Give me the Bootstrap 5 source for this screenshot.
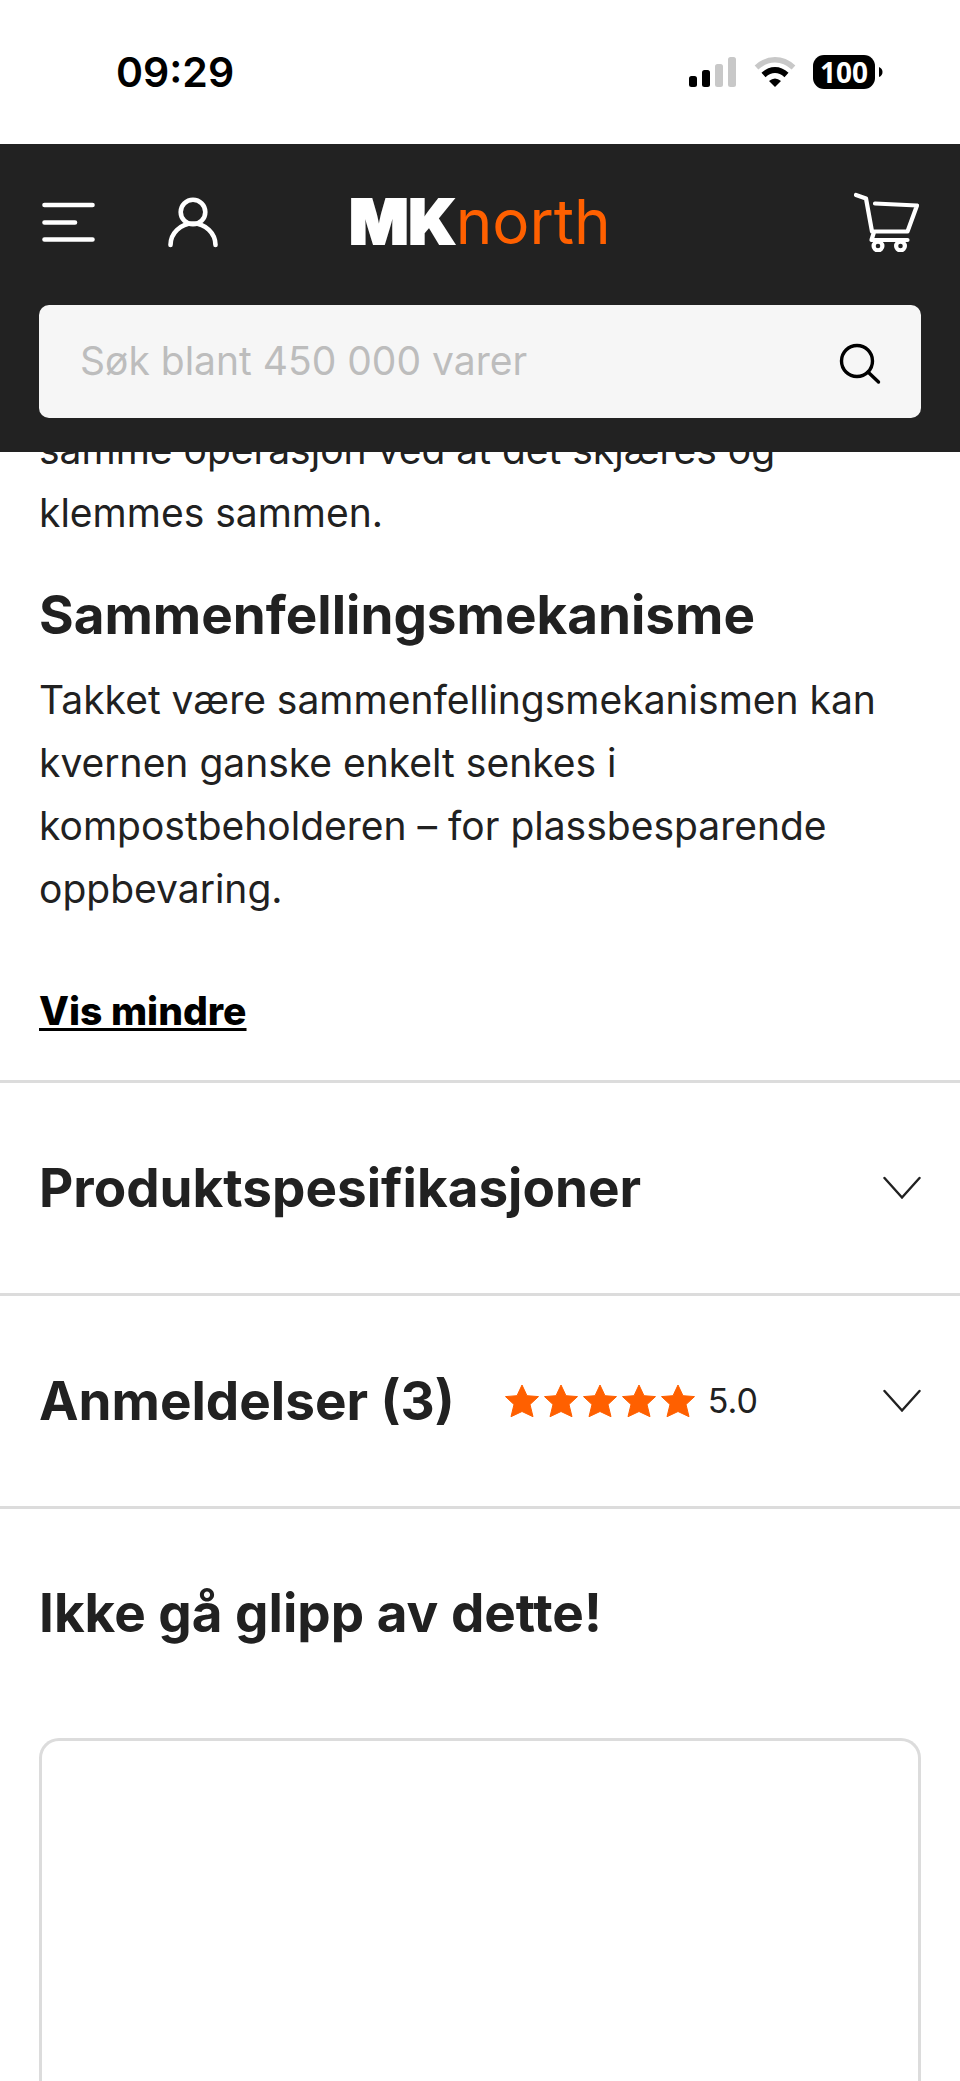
<!DOCTYPE html>
<html lang="no">
<head>
<meta charset="utf-8">
<meta name="viewport" content="width=device-width, initial-scale=1">
<title>MKnorth</title>
<link href="https://cdn.jsdelivr.net/npm/bootstrap@5.3.0/dist/css/bootstrap.min.css" rel="stylesheet">
<style>
  :root { --ink: #212121; --orange: #ff6000; --rule: #dcdcdc; --gutter: 39px; }
  body { font-family: Inter, "Liberation Sans", sans-serif; font-size: 39px; line-height: 63px; color: var(--ink); background: #fff; }
  svg { display: block; flex: none; }
  .gutter { padding-left: var(--gutter); padding-right: var(--gutter); }
  .status-bar { height: 144px; padding: 0 77px 0 116px; color: #000; }
  .clock { font-size: 41px; font-weight: 600; line-height: 48px; }
  .battery-level { width: 62px; height: 34px; border-radius: 11px; background: #000; color: #fff; font: 700 28px/34px "Noto Sans", sans-serif; }
  .site-header { background: #222; padding-bottom: 34px; z-index: 2; }
  .top-row { height: 161px; padding-bottom: 5px; }
  .top-row > * { flex: 1 1 0; }
  .icon-btn { border: 0; background: none; padding: 0; color: #fff; }
  .brand { font-size: 62px; line-height: 64px; color: var(--orange); text-decoration: none; }
  .brand strong { font-weight: 900; color: #fff; -webkit-text-stroke: 2px #fff; }
  .search-box { background: #f6f6f6; border-radius: 10px; height: 113px; padding: 0 37px 0 41px; }
  .search-box input { font-size: 39px; border: 0; background: none; padding: 0; box-shadow: none; min-width: 0; color: var(--ink); }
  .search-box input:focus { background: none; box-shadow: none; }
  .search-box input::placeholder { color: #bdbdbd; opacity: 1; }
  .description { margin-top: -34px; padding-bottom: 45px; }
  .description p { margin: 0; }
  .title-lg { font-size: 53px; line-height: 64px; font-weight: 700; margin: 0; }
  .description .title-lg { padding: 0; margin: 39px 0 21px; }
  .less-link { display: block; width: fit-content; font-weight: 800; line-height: 48px; color: #000; text-decoration: underline; text-decoration-thickness: 3px; text-underline-offset: 3px; margin-top: 67px; }
  .section-toggle { border: 0; border-top: 3px solid var(--rule); background: none; height: 213px; color: var(--ink); }
  .score { font-size: 34px; line-height: 48px; }
  .rating { margin-left: 50px; gap: 13px; }
  .stars { gap: 5px; color: var(--orange); }
  .offers { border-top: 3px solid var(--rule); padding-top: 72px; }
  .offer-card { border: 3px solid var(--rule); border-bottom: 0; border-radius: 20px 20px 0 0; margin-top: 93px; }
</style>
</head>
<body class="d-flex flex-column min-vh-100">
<svg class="d-none" aria-hidden="true">
  <symbol id="star" viewBox="0 0 34 34"><path fill="currentColor" stroke="currentColor" stroke-linejoin="round" d="M17 1l5 10.700L33.500 12.600 25 20.500 28 32.700 17 27.500 6 32.700 9 20.500.5 12.600 12 11.700z"/></symbol>
  <symbol id="chevron" viewBox="0 0 38 24"><path fill="none" stroke="currentColor" stroke-width="2.400" stroke-linecap="round" d="M1.500 2L19 21.500 36.500 2"/></symbol>
</svg>

<div class="status-bar d-flex justify-content-between align-items-center">
  <span class="clock">09:29</span>
  <div class="d-flex align-items-center">
    <svg width="48" height="32" viewBox="0 0 48 32" aria-hidden="true">
      <rect y="20" width="8" height="11" rx="2.500"/><rect x="13" y="14" width="8" height="17" rx="2.500"/>
      <rect x="26" y="8" width="8" height="23" rx="2.500" fill="#c8c8c8"/><rect x="39" y="1" width="8" height="30" rx="2.500" fill="#c8c8c8"/>
    </svg>
    <svg class="ms-3 me-3" width="44" height="32" viewBox="0 0 44 32" aria-hidden="true">
      <path fill="none" stroke="#c8c8c8" stroke-width="5.500" d="M3.500 11.500Q12 3.800 22 3.800T40.500 11.500"/>
      <path fill="none" stroke="#000" stroke-width="6" d="M10.500 19Q16 14 22 14T33.500 19"/>
      <path d="M16 25Q22 20 28 25L22 31z"/>
    </svg>
    <div class="battery-level text-center">100</div>
    <svg class="ms-1" width="4" height="10" viewBox="0 0 4 10" aria-hidden="true"><path d="M0 0Q3.500 1.500 3.500 5T0 10z"/></svg>
  </div>
</div>

<header class="site-header gutter position-sticky top-0">
  <div class="top-row d-flex align-items-center">
    <div class="d-flex align-items-center">
      <button class="icon-btn" type="button" aria-label="Meny">
        <svg width="60" height="60" viewBox="0 0 60 60" fill="none" stroke="currentColor" stroke-width="4.600" stroke-linecap="round"><path d="M5.500 13H53.500M5.500 30.500H36M5.500 47.500H53.500"/></svg>
      </button>
      <button class="icon-btn ms-5" type="button" aria-label="Min side">
        <svg class="ms-3" width="60" height="60" viewBox="0 0 60 60" fill="none" stroke="currentColor" stroke-width="4.600" stroke-linecap="round"><circle cx="30" cy="20" r="12.300"/><path d="M7.500 53a22.500 21.500 0 0 1 45 0"/></svg>
      </button>
    </div>
    <a class="brand text-center text-nowrap" href="#" aria-label="MKnorth"><strong>MK</strong>north</a>
    <div class="d-flex justify-content-end">
      <button class="icon-btn" type="button" aria-label="Handlekurv">
        <svg width="68" height="60" viewBox="0 0 68 60" fill="none" stroke="currentColor" stroke-width="4.200" stroke-linecap="round" stroke-linejoin="round"><path d="M3 3L13 6.500 19 39.500H54.500L64 13.500 22 11.500M21 40L18.500 48H54.500"/><circle cx="25" cy="54" r="4.400"/><circle cx="47.500" cy="54" r="4.400"/></svg>
      </button>
    </div>
  </div>
  <form class="search-box d-flex align-items-center justify-content-between" role="search">
    <input class="form-control" type="search" placeholder="Søk blant 450 000 varer" aria-label="Søk blant 450 000 varer">
    <button class="icon-btn text-black" type="submit" aria-label="Søk">
      <svg width="46" height="46" viewBox="0 0 46 46" fill="none" stroke="currentColor" stroke-width="3.400" stroke-linecap="round"><circle cx="19" cy="22" r="15.500"/><path d="M30 33L40.500 43"/></svg>
    </button>
  </form>
</header>

<main class="d-flex flex-column flex-grow-1">
  <section class="description gutter">
    <p>samme operasjon ved at det skjæres og klemmes sammen.</p>
    <h2 class="title-lg">Sammenfellingsmekanisme</h2>
    <p>Takket være sammenfellingsmekanismen kan kvernen ganske enkelt senkes i kompostbeholderen – for plassbesparende oppbevaring.</p>
    <a class="less-link" href="#">Vis mindre</a>
  </section>

  <button class="section-toggle gutter d-flex align-items-center w-100" type="button" aria-expanded="false">
    <span class="title-lg">Produktspesifikasjoner</span>
    <svg class="ms-auto" width="38" height="24"><use href="#chevron"/></svg>
  </button>
  <button class="section-toggle gutter d-flex align-items-center w-100" type="button" aria-expanded="false">
    <span class="title-lg">Anmeldelser (3)</span>
    <span class="rating d-flex align-items-center">
      <span class="stars d-flex" role="img" aria-label="5 av 5 stjerner">
        <svg width="34" height="34"><use href="#star"/></svg>
        <svg width="34" height="34"><use href="#star"/></svg>
        <svg width="34" height="34"><use href="#star"/></svg>
        <svg width="34" height="34"><use href="#star"/></svg>
        <svg width="34" height="34"><use href="#star"/></svg>
      </span>
      <span class="score">5.0</span>
    </span>
    <svg class="ms-auto" width="38" height="24"><use href="#chevron"/></svg>
  </button>

  <section class="offers gutter d-flex flex-column flex-grow-1">
    <h2 class="title-lg">Ikke gå glipp av dette!</h2>
    <div class="offer-card flex-grow-1"></div>
  </section>
</main>
<script src="https://cdn.jsdelivr.net/npm/bootstrap@5.3.0/dist/js/bootstrap.bundle.min.js"></script>
</body>
</html>
